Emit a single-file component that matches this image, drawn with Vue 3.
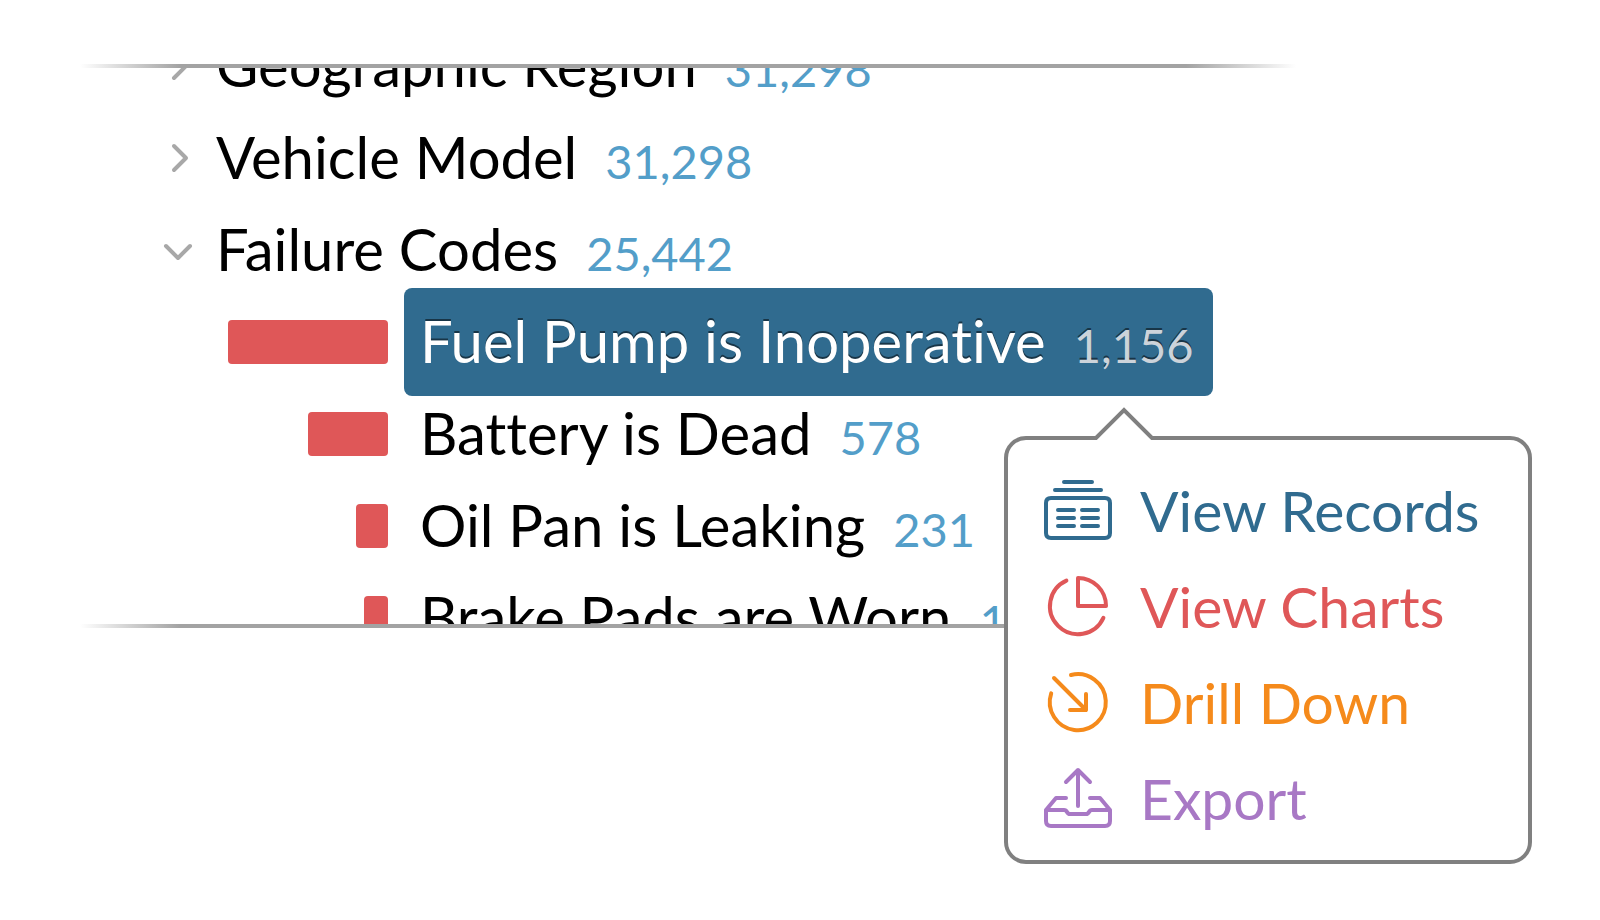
<script setup>
import { ref } from 'vue'

const groups = [
  { name: 'Geographic Region', count: '31,298', open: false, items: [] },
  { name: 'Vehicle Model', count: '31,298', open: false, items: [] },
  {
    name: 'Failure Codes',
    count: '25,442',
    open: true,
    items: [
      { name: 'Fuel Pump is Inoperative', count: '1,156', bar: 160 },
      { name: 'Battery is Dead', count: '578', bar: 80 },
      { name: 'Oil Pan is Leaking', count: '231', bar: 32 },
      { name: 'Brake Pads are Worn', count: '173', bar: 24 }
    ]
  }
]

const selected = ref('Fuel Pump is Inoperative')

const actions = [
  {
    label: 'View Records',
    tone: 'blue',
    icon: 'M20 6H48M11 14H57M7 22H61Q66 22 66 27V57Q66 62 61 62H7Q2 62 2 57V27Q2 22 7 22ZM14 34H30M38 34H54M14 42H30M38 42H54M14 50H30M38 50H54'
  },
  {
    label: 'View Charts',
    tone: 'red',
    icon: 'M34 6A28 28 0 0 1 62 34H34ZM22.4 8.6A28 28 0 1 0 59.4 45.8'
  },
  {
    label: 'Drill Down',
    tone: 'orange',
    icon: 'M27 7A28 28 0 1 1 7.2 25.4M10 10L42 42M42 26V42H26'
  },
  {
    label: 'Export',
    tone: 'purple',
    icon: 'M34 42V6M22 18L34 6L46 18M22 34H12L2 46V57Q2 62 7 62H61Q66 62 66 57V46L56 34H46M2 46H20Q22 46 23 48Q24 50 26 50H42Q44 50 45 48Q46 46 48 46H66'
  }
]
</script>

<template>
  <main class="stage">
    <section class="panel" aria-label="Facets">
      <ul class="tree">
        <li v-for="group in groups" :key="group.name">
          <button class="row" type="button" :aria-expanded="group.open">
            <svg class="chevron" viewBox="0 0 36 36" aria-hidden="true">
              <path :d="group.open ? 'M6 14L18 26L30 14' : 'M14 6L26 18L14 30'" />
            </svg>
            <span class="name">{{ group.name }}</span>
            <span class="count">{{ group.count }}</span>
          </button>
          <ul v-if="group.open" class="tree">
            <li v-for="item in group.items" :key="item.name" class="leaf">
              <span class="track"><span class="bar" :style="{ width: item.bar + 'px' }"></span></span>
              <button
                class="code"
                :class="{ selected: item.name === selected }"
                type="button"
                @click="selected = item.name"
              >
                <span class="name">{{ item.name }}</span>
                <span class="count">{{ item.count }}</span>
              </button>
            </li>
          </ul>
        </li>
      </ul>
    </section>

    <nav class="popover" aria-label="Actions">
      <svg class="pointer" viewBox="0 0 60 36" aria-hidden="true">
        <path class="pointer-fill" d="M0 36L30 7L60 36Z" />
        <path class="pointer-line" d="M0 34H2L30 6L58 34H60" />
      </svg>
      <button v-for="action in actions" :key="action.label" class="action" :class="action.tone" type="button">
        <svg class="icon" viewBox="0 0 68 68" aria-hidden="true"><path :d="action.icon" /></svg>
        <span>{{ action.label }}</span>
      </button>
    </nav>
  </main>
</template>

<style>
body {
  margin: 0;
  background: #fff;
}
</style>

<style scoped>
.stage {
  position: relative;
  box-sizing: border-box;
  min-height: 100vh;
  padding: 64px 304px 0 80px;
  font-family: Lato, "Liberation Sans", sans-serif;
  font-size: 58px;
  font-variant-ligatures: none;
  line-height: 90px;
  color: #000;
}

button {
  margin: 0;
  padding: 0;
  border: 0;
  background: none;
  font: inherit;
  color: inherit;
  text-align: left;
  white-space: nowrap;
  cursor: pointer;
}

.panel {
  height: 556px;
  overflow: hidden;
  border: solid transparent;
  border-width: 4px 0;
  border-image: linear-gradient(to right, transparent, #a3a3a3 100px, #a3a3a3 calc(100% - 110px), transparent) 4 0;
}

.tree {
  margin: 0;
  padding: 0;
  list-style: none;
}

.panel > .tree {
  margin-top: -48px;
}

.row {
  display: flex;
  align-items: baseline;
  height: 92px;
  padding-left: 80px;
}

.chevron {
  align-self: center;
  width: 36px;
  height: 36px;
  margin-right: 20px;
  fill: none;
  stroke: #a8a8a8;
  stroke-width: 4;
  stroke-linecap: round;
  stroke-linejoin: round;
}

.count {
  margin-left: 28px;
  font-size: 47px;
  line-height: 56px;
  color: #539ec9;
}

.leaf {
  display: flex;
  align-items: center;
  height: 92px;
}

.track {
  display: flex;
  justify-content: flex-end;
  width: 308px;
  margin-right: 16px;
}

.bar {
  height: 44px;
  border-radius: 4px;
  background: #df5758;
}

.code {
  display: flex;
  align-items: baseline;
  padding: 8px 20px 10px 16px;
  border-radius: 8px;
}

.selected {
  background: #306b8f;
  color: #fff;
  text-shadow: 0 -2px 0 rgba(0, 0, 0, 0.5);
}

.selected .count {
  color: #ccd3da;
}

.popover {
  position: absolute;
  top: 436px;
  right: 68px;
  box-sizing: border-box;
  width: 528px;
  padding: 22px 0 14px 36px;
  border: 4px solid #808080;
  border-radius: 22px;
  background: #fff;
  font-size: 57px;
}

.pointer {
  position: absolute;
  top: -36px;
  left: 86px;
  width: 60px;
  height: 36px;
}

.pointer-fill {
  fill: #fff;
}

.pointer-line {
  fill: none;
  stroke: #808080;
  stroke-width: 4;
}

.action {
  display: flex;
  align-items: center;
  width: 100%;
  height: 96px;
}

.icon {
  flex: none;
  width: 68px;
  height: 68px;
  margin-right: 28px;
  fill: none;
  stroke: currentColor;
  stroke-width: 4;
  stroke-linecap: round;
  stroke-linejoin: round;
}

.blue { color: #306b8f; }
.red { color: #df5758; }
.orange { color: #f58a1b; }
.purple { color: #a878c5; }
</style>
